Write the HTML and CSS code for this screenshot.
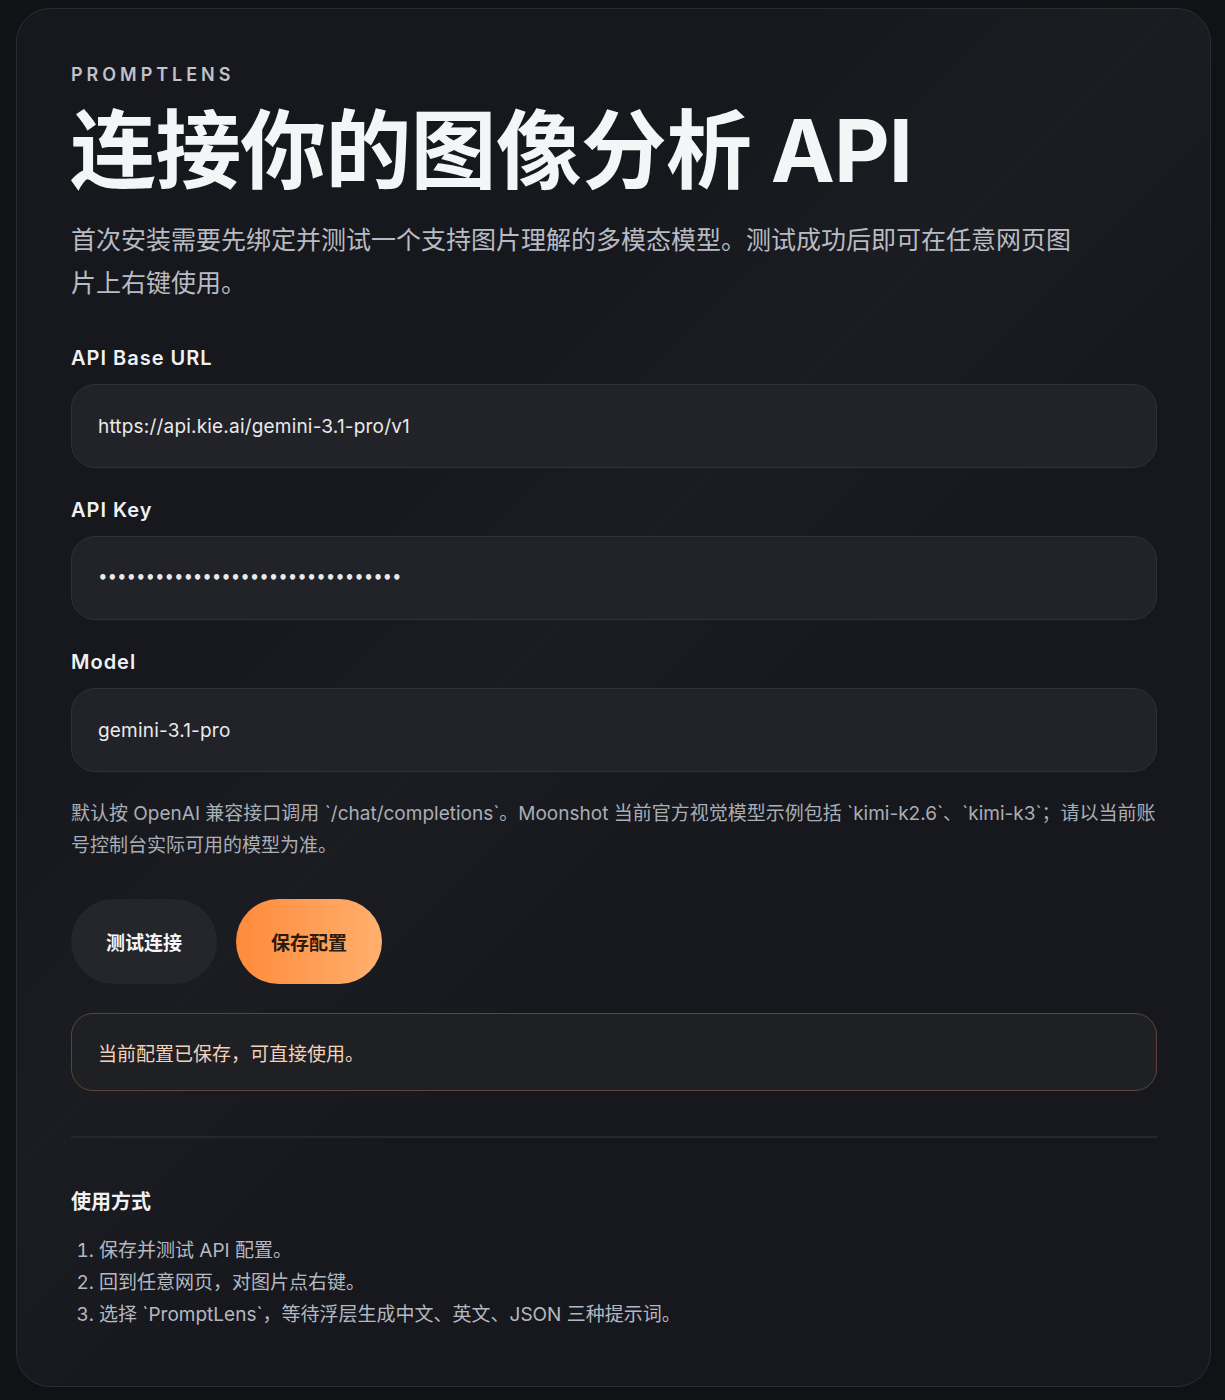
FILE: index.html
```html
<!DOCTYPE html>
<html lang="zh-CN">
<head>
<meta charset="utf-8">
<title>PromptLens 设置</title>
<link rel="stylesheet" href="styles.css">
</head>
<body>
<main class="card">
  <p class="eyebrow">PROMPTLENS</p>
  <h1 class="title">连接你的图像分析 API</h1>
  <p class="lead">首次安装需要先绑定并测试一个支持图片理解的多模态模型。测试成功后即可在任意网页图片上右键使用。</p>

  <form class="form">
    <label class="field">
      <span class="label">API Base URL</span>
      <span class="input">https://api.kie.ai/gemini-3.1-pro/v1</span>
    </label>
    <label class="field">
      <span class="label">API Key</span>
      <span class="input input-secret">••••••••••••••••••••••••••••••••</span>
    </label>
    <label class="field">
      <span class="label">Model</span>
      <span class="input">gemini-3.1-pro</span>
    </label>
  </form>

  <p class="hint">默认按 OpenAI 兼容接口调用 `/chat/completions`。Moonshot 当前官方视觉模型示例包括 `kimi-k2.6`、`kimi-k3`；请以当前账号控制台实际可用的模型为准。</p>

  <div class="actions">
    <button class="btn btn-secondary" type="button">测试连接</button>
    <button class="btn btn-primary" type="button">保存配置</button>
  </div>

  <div class="status">当前配置已保存，可直接使用。</div>

  <hr class="divider">

  <section class="usage">
    <h2 class="usage-title">使用方式</h2>
    <ol class="steps">
      <li>保存并测试 API 配置。</li>
      <li>回到任意网页，对图片点右键。</li>
      <li>选择 `PromptLens`，等待浮层生成中文、英文、JSON 三种提示词。</li>
    </ol>
  </section>
</main>
</body>
</html>
```

FILE: styles.css
```css
* { box-sizing: border-box; }

html, body {
  margin: 0;
  background: #111215;
}

body {
  padding: 8px 14px 14px 16px;
  font-family: "Inter", "Noto Sans CJK SC", "Noto Sans", sans-serif;
  color: #f2f3f5;
}

.card {
  border: 1px solid #2b2d33;
  border-radius: 34px;
  background:
    linear-gradient(135deg, rgba(255,255,255,0) 30%, rgba(255,255,255,0.018) 45%, rgba(255,255,255,0) 60%),
    #17181d;
  padding: 54px 53px 55px 54px;
  min-height: 1378px;
}

.eyebrow {
  margin: 0;
  font-size: 18px;
  line-height: 24px;
  letter-spacing: 0.22em;
  font-weight: 600;
  color: #bfc2c9;
}

.title {
  margin: 8px 0 0 -1px;
  font-size: 86px;
  line-height: 112px;
  font-weight: 700;
  letter-spacing: -0.01em;
  color: #f4f5f7;
}

.lead {
  margin: 12px 0 0;
  max-width: 1010px;
  font-size: 25px;
  line-height: 43px;
  color: #b8bbc3;
}

.form {
  margin-top: 41px;
  display: flex;
  flex-direction: column;
  gap: 30px;
}

.field {
  display: flex;
  flex-direction: column;
  gap: 14px;
}

.label {
  font-size: 20px;
  line-height: 24px;
  font-weight: 600;
  letter-spacing: 0.05em;
  color: #f0f1f3;
}

.input {
  display: flex;
  align-items: center;
  height: 84px;
  padding: 0 26px;
  border: 1px solid #2f3138;
  border-radius: 24px;
  background: #212328;
  font-size: 19px;
  letter-spacing: 0.01em;
  color: #e9eaec;
}

.input-secret {
  font-size: 15px;
  font-weight: 700;
  letter-spacing: -0.1px;
  font-family: "DejaVu Sans", sans-serif;
}

.hint {
  margin: 26px 0 0;
  font-size: 19px;
  line-height: 32px;
  color: #aaaeb6;
}

.actions {
  margin-top: 37px;
  display: flex;
  gap: 19px;
}

.btn {
  height: 85px;
  padding: 0 35px;
  border: 0;
  border-radius: 999px;
  font-family: inherit;
  font-size: 19px;
  font-weight: 700;
}

.btn-secondary {
  background: #25262c;
  color: #f4f5f7;
}

.btn-primary {
  background: linear-gradient(90deg, #ff8a3c, #ffb06e);
  color: #2a1a10;
}

.status {
  margin-top: 29px;
  display: flex;
  align-items: center;
  height: 78px;
  padding: 0 26px;
  border: 1px solid #5e4438;
  border-radius: 22px;
  background: #1f2024;
  font-size: 19px;
  color: #f3d2bb;
}

.divider {
  margin: 45px 0 0;
  border: 0;
  border-top: 2px solid #26282d;
}

.usage {
  margin-top: 50px;
}

.usage-title {
  margin: 0;
  font-size: 20px;
  line-height: 28px;
  font-weight: 700;
  color: #f0f1f3;
}

.steps {
  margin: 19px 0 0;
  padding-left: 28px;
  font-size: 19px;
  line-height: 32px;
  color: #b5b8c0;
}
```
